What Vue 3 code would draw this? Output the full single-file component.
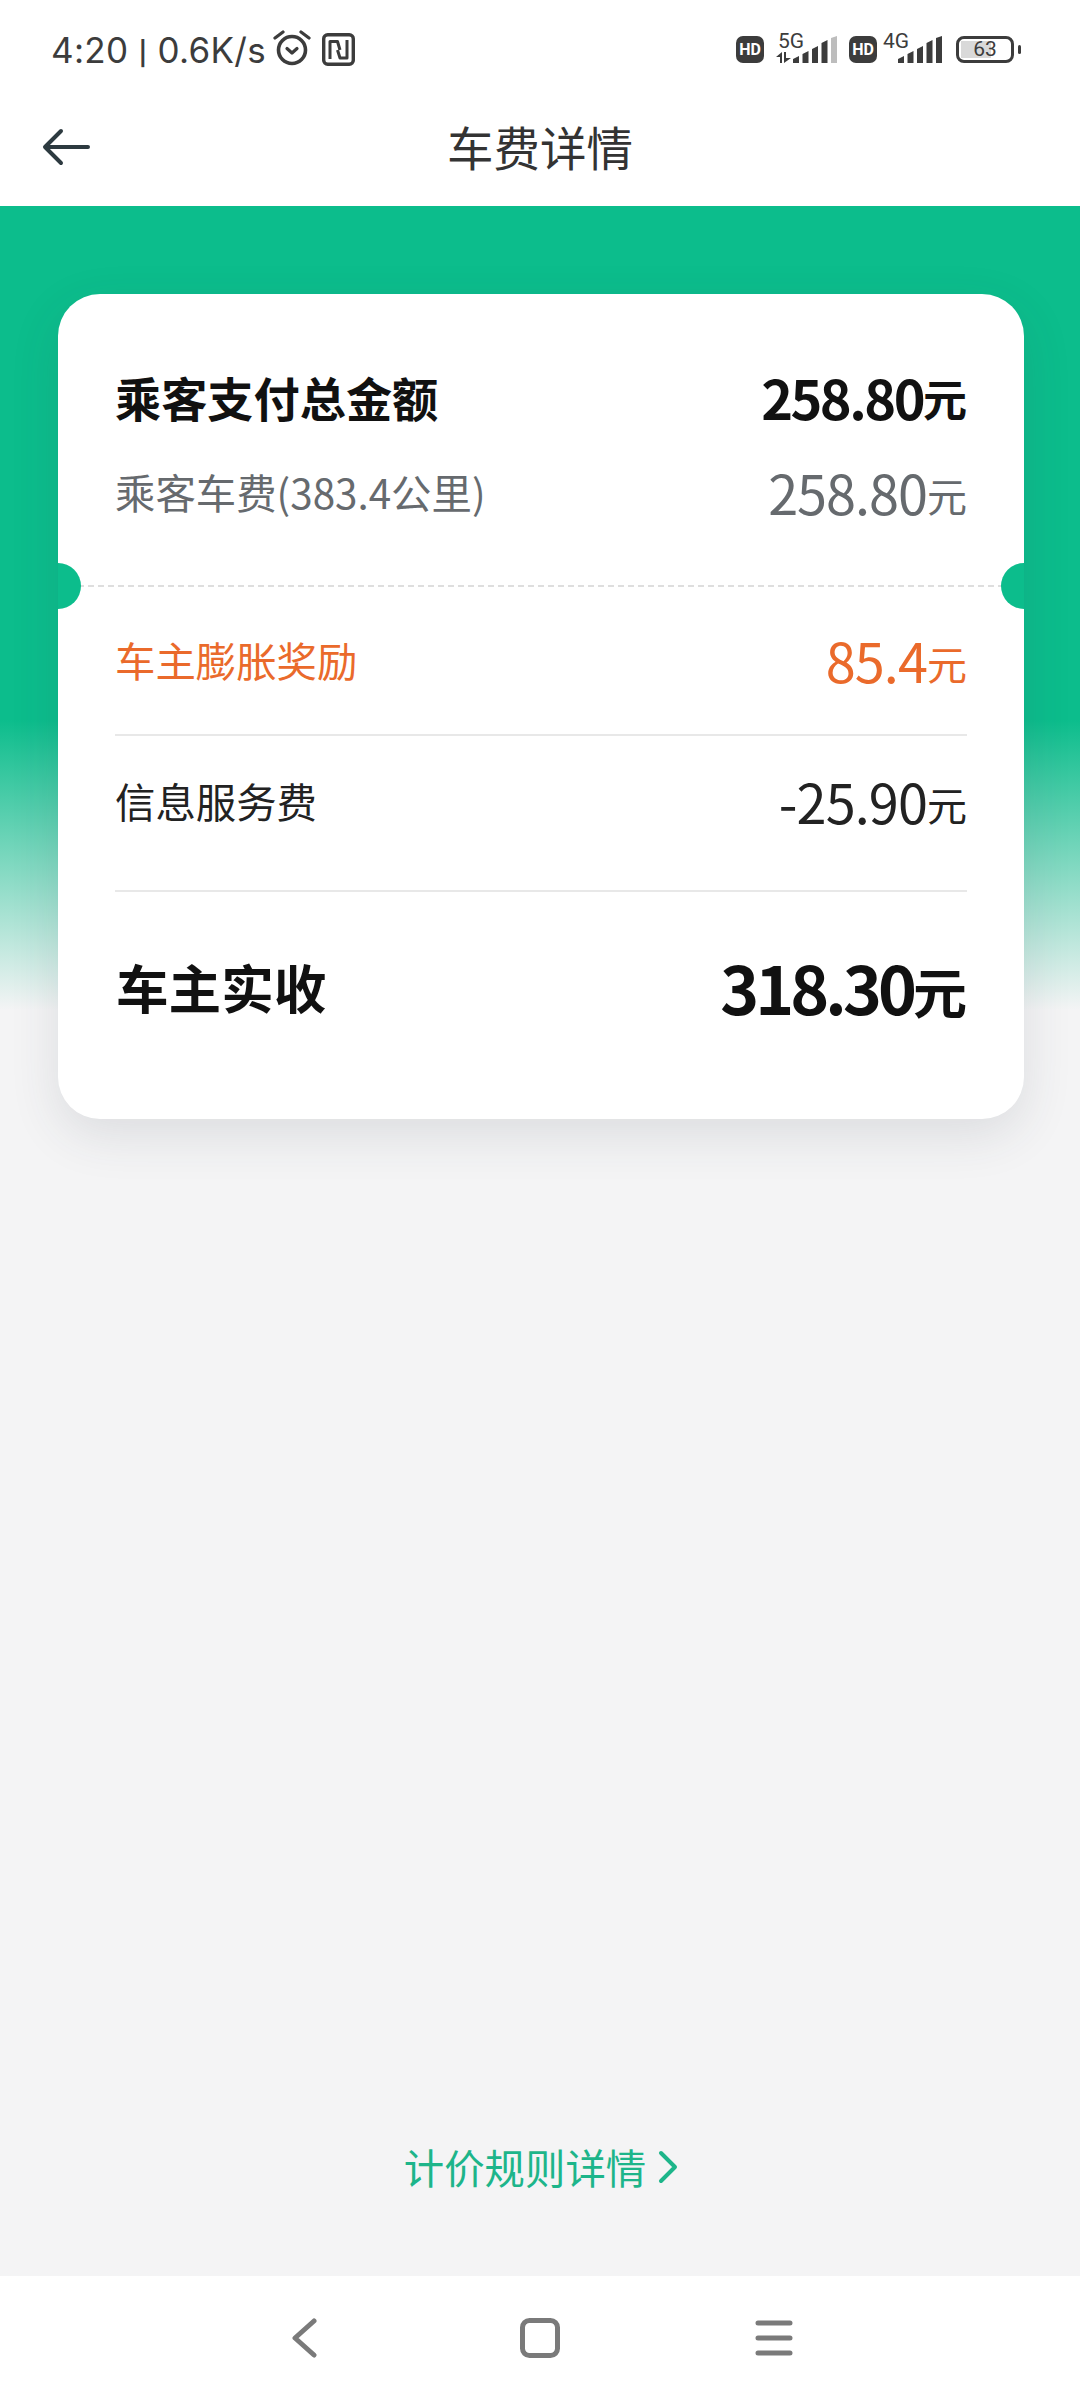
<template>
  <div class="page">
    <div class="status-bar">
      <span class="clock">4:20 <span class="pipe">|</span> 0.6K/s</span>
      <svg class="alarm" width="40" height="36" viewBox="0 0 40 36">
        <circle cx="20" cy="20" r="13.5" fill="none" stroke="#3c3c3c" stroke-width="3.6" />
        <path d="M15 18.5l5 4.5 5-4.5" fill="none" stroke="#3c3c3c" stroke-width="3.2" stroke-linecap="round" stroke-linejoin="round" />
        <path d="M3 8l8-6M37 8l-8-6" fill="none" stroke="#3c3c3c" stroke-width="3.2" stroke-linecap="round" />
      </svg>
      <svg class="nfc" width="33" height="33" viewBox="0 0 33 33">
        <rect x="1.7" y="1.7" width="29.6" height="29.6" rx="4" fill="none" stroke="#3c3c3c" stroke-width="3.4" />
        <path d="M8 26V8.5h7.5L18 17M25 7v18h-7l-2.500-8" fill="none" stroke="#3c3c3c" stroke-width="3" stroke-linejoin="round" />
      </svg>
      <div class="status-right">
        <span class="hd">HD</span>
        <div class="signal signal-five">
          <span class="net-label">5G</span>
          <svg class="arrows" width="15" height="11" viewBox="0 0 15 11">
            <path d="M0 5l6-5v11H4V5zM8 0h2v6h5l-7 5z" fill="#3c3c3c" />
          </svg>
          <svg class="bars" width="44" height="27" viewBox="0 0 44 27">
            <path d="M0 27v-4l6-3v7zM9.500 27V18l6-3v12zM19 27V13l6-3v17zM28.500 27V7l6-3v23z" fill="#3c3c3c" />
            <path d="M38 27V2l6-2v27z" fill="#bdbdbd" />
          </svg>
        </div>
        <span class="hd">HD</span>
        <div class="signal signal-four">
          <span class="net-label">4G</span>
          <svg class="bars" width="44" height="27" viewBox="0 0 44 27">
            <path d="M0 27v-4l6-3v7zM9.500 27V18l6-3v12zM19 27V13l6-3v17zM28.500 27V7l6-3v23zM38 27V2l6-2v27z" fill="#3c3c3c" />
          </svg>
        </div>
        <div class="battery">
          <span class="battery-fill"></span>
          <span class="battery-text">63</span>
        </div>
        <span class="battery-nub"></span>
      </div>
    </div>

    <div class="title-bar">
      <svg class="back" width="50" height="40" viewBox="0 0 50 40">
        <path d="M46 20H4M19 4L3 20l16 16" fill="none" stroke="#2d3a40" stroke-width="4" stroke-linecap="round" stroke-linejoin="round" />
      </svg>
      <span class="title">车费详情</span>
    </div>

    <div class="content">
      <div class="card">
        <span class="notch notch-left"></span>
        <span class="notch notch-right"></span>

        <div class="row row-total">
          <span class="label">乘客支付总金额</span>
          <span class="amount">258.80<small>元</small></span>
        </div>
        <div class="row row-fare">
          <span class="label">乘客车费(383.4公里)</span>
          <span class="amount">258.80<small>元</small></span>
        </div>

        <div class="dashed"></div>

        <div class="row row-bonus">
          <span class="label">车主膨胀奖励</span>
          <span class="amount">85.4<small>元</small></span>
        </div>
        <div class="row row-fee">
          <span class="label">信息服务费</span>
          <span class="amount">-25.90<small>元</small></span>
        </div>
        <div class="row row-income">
          <span class="label">车主实收</span>
          <span class="amount">318.30<small>元</small></span>
        </div>
      </div>

      <div class="rule-link">
        <span>计价规则详情</span>
        <svg width="20" height="34" viewBox="0 0 20 34">
          <path d="M3 3l14 14L3 31" fill="none" stroke="#1db58a" stroke-width="4" stroke-linecap="round" stroke-linejoin="round" />
        </svg>
      </div>
    </div>

    <div class="nav-bar">
      <svg width="26" height="40" viewBox="0 0 26 40">
        <path d="M23 3L4 20l19 17" fill="none" stroke="#7a7a7a" stroke-width="5" stroke-linecap="round" stroke-linejoin="round" />
      </svg>
      <svg class="nav-home" width="40" height="40" viewBox="0 0 40 40">
        <rect x="2.500" y="2.500" width="35" height="35" rx="7" fill="none" stroke="#7a7a7a" stroke-width="5" />
      </svg>
      <svg width="38" height="36" viewBox="0 0 38 36">
        <path d="M3 3h32M3 18h32M3 33h32" fill="none" stroke="#7a7a7a" stroke-width="5" stroke-linecap="round" />
      </svg>
    </div>
  </div>
</template>

<script setup>
</script>

<style>
body {
  background: #f4f4f5;
}
</style>

<style scoped>
.page {
  width: 1080px;
  height: 2400px;
  display: flex;
  flex-direction: column;
  background: #f4f4f5;
  font-family: "Noto Sans CJK SC", "Noto Sans", sans-serif;
  overflow: hidden;
}

.status-bar {
  height: 96px;
  flex: none;
  box-sizing: border-box;
  display: flex;
  align-items: center;
  padding: 3px 59px 0 51px;
  background: #fff;
  color: #3c3c3c;
}

.clock {
  font-family: Inter, sans-serif;
  font-size: 35px;
  letter-spacing: 0.3px;
  white-space: nowrap;
}

.pipe {
  font-family: Roboto, sans-serif;
  font-weight: 700;
  font-size: 34px;
}

.alarm {
  margin-left: 6px;
  margin-top: -4px;
}

.nfc {
  margin-left: 10px;
}

.status-right {
  margin-left: auto;
  display: flex;
  align-items: center;
}

.hd {
  width: 28px;
  height: 27px;
  flex: none;
  border-radius: 7px;
  background: #3c3c3c;
  color: #fff;
  font: 700 16px/27px Roboto, sans-serif;
  text-align: center;
}

.signal {
  position: relative;
  height: 27px;
  flex: none;
}

.signal-five {
  width: 61px;
  margin: 0 12px;
}

.signal-four {
  width: 59px;
  margin: 0 14px 0 6px;
}

.net-label {
  position: absolute;
  top: -5px;
  font: 400 21px/21px Roboto, sans-serif;
  color: #3c3c3c;
}

.signal-five .net-label {
  left: 2px;
}

.signal-four .net-label {
  left: 0;
}

.arrows {
  position: absolute;
  left: 0;
  bottom: 0;
}

.bars {
  position: absolute;
  right: 0;
  bottom: 0;
}

.battery {
  width: 58px;
  height: 27px;
  flex: none;
  border: 3px solid #3c3c3c;
  border-radius: 8px;
  box-sizing: border-box;
  position: relative;
  overflow: hidden;
  font: 400 21px/21px Roboto, sans-serif;
  color: #3c3c3c;
  text-align: center;
}

.battery-fill {
  position: absolute;
  left: 2px;
  top: 2px;
  bottom: 2px;
  width: 30px;
  background: #d9d9d9;
}

.battery-text {
  position: relative;
}

.battery-nub {
  width: 3px;
  height: 9px;
  flex: none;
  margin-left: 4px;
  border-radius: 2px;
  background: #3c3c3c;
}

.title-bar {
  height: 110px;
  flex: none;
  position: relative;
  display: flex;
  align-items: center;
  justify-content: center;
  background: #fff;
}

.back {
  position: absolute;
  left: 42px;
  top: 31px;
}

.title {
  font-size: 46.5px;
  color: #333;
  margin-top: -11px;
}

.content {
  flex: 1;
  display: flex;
  flex-direction: column;
  background: linear-gradient(#0cbd8c 0, #0cbd8c 514px, #f4f4f5 804px);
  padding: 88px 56px 0 58px;
}

.card {
  position: relative;
  height: 825px;
  flex: none;
  display: flex;
  flex-direction: column;
  padding: 0 57px;
  background: #fff;
  border-radius: 42px;
  box-shadow: 0 16px 50px rgba(50, 60, 70, 0.12);
  overflow: hidden;
}

.notch {
  position: absolute;
  top: 269px;
  width: 46px;
  height: 46px;
  border-radius: 50%;
  background: #0cbd8c;
}

.notch-left {
  left: -23px;
}

.notch-right {
  right: -23px;
}

.row {
  display: flex;
  align-items: center;
  justify-content: space-between;
  white-space: nowrap;
  flex: none;
}

.row small {
  letter-spacing: 0;
  position: relative;
  top: -3px;
}

.row-total {
  height: 76px;
  margin-top: 64px;
  color: #111;
  font-weight: 700;
}

.row-total .label {
  font-size: 46.2px;
}

.row-total .amount {
  font-size: 54px;
  letter-spacing: -2.5px;
}

.row-total small {
  font-size: 44px;
}

.row-fare {
  height: 110px;
  margin-top: 2px;
  margin-bottom: 39px;
  color: #666a6e;
}

.row-fare .label {
  font-size: 40.4px;
}

.row-fare .amount {
  font-size: 54px;
  letter-spacing: -1px;
}

.row-fare small {
  font-size: 40px;
}

.dashed {
  height: 0;
  flex: none;
  margin: 0 -37px;
  border-top: 2px dashed #dedede;
}

.row-bonus {
  height: 144px;
  padding-bottom: 3px;
  color: #ea6a2b;
  border-bottom: 2px solid #e8e8e8;
}

.row-bonus .label {
  font-size: 40.4px;
}

.row-bonus .amount {
  font-size: 54px;
  letter-spacing: -0.9px;
}

.row-bonus small {
  font-size: 40px;
}

.row-fee {
  height: 156px;
  padding-bottom: 26px;
  box-sizing: border-box;
  color: #222;
  border-bottom: 2px solid #e8e8e8;
}

.row-fee .label {
  font-size: 40.4px;
}

.row-fee .amount {
  font-size: 54px;
  letter-spacing: -0.9px;
}

.row-fee small {
  font-size: 40px;
}

.row-income {
  flex: 1;
  padding-bottom: 39px;
  color: #111;
  font-weight: 700;
}

.row-income .label {
  font-size: 52.6px;
  margin-left: 1px;
}

.row-income .amount {
  font-size: 66px;
  letter-spacing: -3.9px;
}

.row-income small {
  font-size: 54px;
  top: -1px;
}

.rule-link {
  margin-top: auto;
  margin-bottom: 80px;
  display: flex;
  align-items: center;
  justify-content: center;
  gap: 12px;
  font-size: 40.4px;
  color: #1db58a;
}

.nav-bar {
  height: 124px;
  flex: none;
  background: #fff;
  display: flex;
  align-items: center;
  justify-content: center;
  padding-left: 4px;
}

.nav-home {
  margin: 0 195px 0 203px;
}
</style>
